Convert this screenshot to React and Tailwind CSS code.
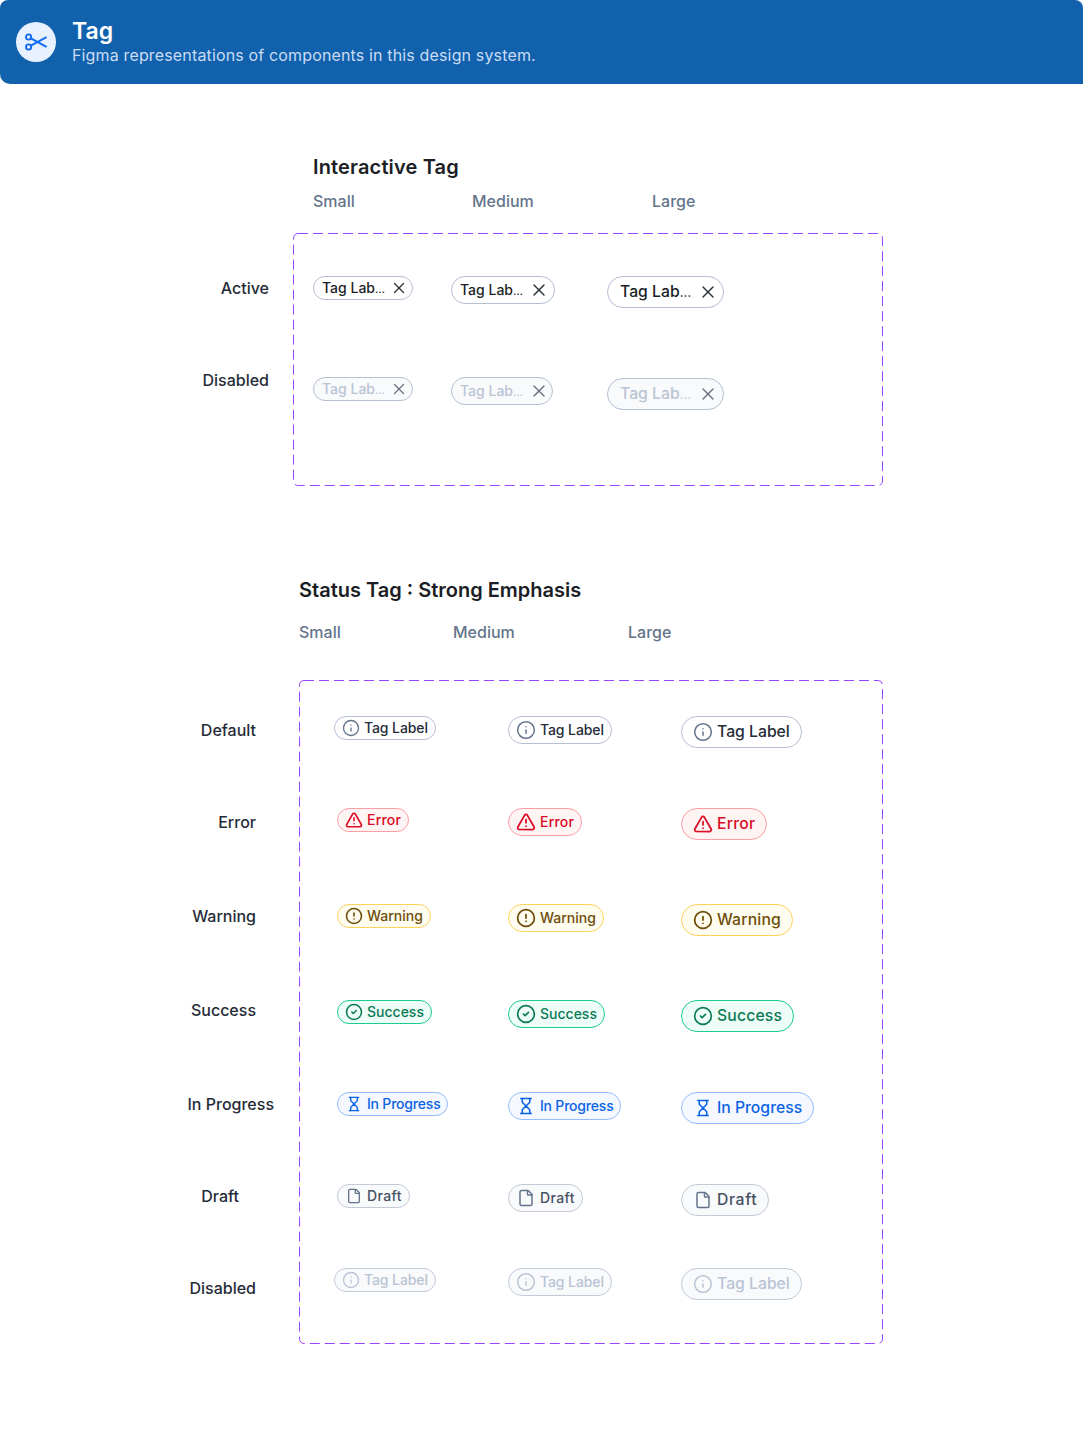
import React from "react";
import { X, Info, TriangleAlert, CircleAlert, CircleCheck, Hourglass, File } from "lucide-react";

const font = { fontFamily: '"Inter", "Open Sans", sans-serif' };

function DashedBox({ w, h, className, children }) {
  return (
    <div className={"relative " + className}>
      <svg className="absolute inset-0 pointer-events-none" width={w} height={h} fill="none">
        <rect x="0.5" y="0.5" width={w - 1} height={h - 1} rx="4.5" stroke="#9747FF" strokeDasharray="10 5" />
      </svg>
      {children}
    </div>
  );
}

function ScissorsIcon() {
  return (
    <svg width="24" height="18" viewBox="0 0 24 18" fill="none" stroke="#0f6cf0" strokeWidth="1.9" strokeLinecap="round">
      <circle cx="4.6" cy="4" r="2.6" />
      <circle cx="4.6" cy="14" r="2.6" />
      <path d="M6.9 5.4 22 13.6" />
      <path d="M6.9 12.6 22 4.4" />
    </svg>
  );
}

const SIZES = {
  s: { pill: "h-6 px-[7px] text-[14px]", icon: 18, text: "-translate-y-px" },
  m: { pill: "h-7 px-[7px] text-[14px]", icon: 20, text: "-translate-y-px" },
  l: { pill: "h-8 px-[11px] text-[15.75px]", icon: 20, text: "" },
};

const VARIANTS = {
  default: { pill: "border-[#b4bfd2] bg-white text-[#262c38]", icon: "text-[#64748b]", Icon: Info, label: "Tag Label", sw: 1.8, d: 0, tr: { s: "tracking-[-0.1px]", m: "tracking-[-0.1px]", l: "" } },
  error: { pill: "border-[#fb9fa6] bg-[#fff4f4] text-[#d90b25]", icon: "text-[#d90b25]", Icon: TriangleAlert, label: "Error", sw: 2.1, d: 0, tr: { s: "tracking-[0.2px]", m: "tracking-[0.2px]", l: "tracking-[0.2px]" } },
  warning: { pill: "border-[#fdd35c] bg-[#fffcf0] text-[#6e4e0b]", icon: "text-[#6e4e0b]", Icon: CircleAlert, label: "Warning", sw: 2.1, d: 0, tr: { s: "", m: "", l: "tracking-[0.15px]" } },
  success: { pill: "border-[#1ccb92] bg-[#eefdf8] text-[#0a7a55]", icon: "text-[#0a7a55]", Icon: CircleCheck, label: "Success", sw: 2, d: 0, tr: { s: "", m: "", l: "tracking-[0.15px]" } },
  progress: { pill: "border-[#94bcfc] bg-[#f5f9ff] text-[#0c63e4]", icon: "text-[#0c63e4]", Icon: Hourglass, label: "In Progress", sw: 2.1, d: 2, tr: { s: "tracking-[-0.2px]", m: "tracking-[-0.2px]", l: "" } },
  draft: { pill: "border-[#c3cad6] bg-[#f8fafc] text-[#465162]", icon: "text-[#64748b]", Icon: File, label: "Draft", sw: 2, d: 2, tr: { s: "tracking-[0.4px]", m: "tracking-[0.4px]", l: "tracking-[0.6px]" } },
  disabled: { pill: "border-[#c3cbd9] bg-[#f8fafc] text-[#bac4d4]", icon: "text-[#bac4d4]", Icon: Info, label: "Tag Label", sw: 1.8, d: 0, tr: { s: "tracking-[-0.1px]", m: "tracking-[-0.1px]", l: "" } },
};

function StatusTag({ variant, size, className = "" }) {
  const v = VARIANTS[variant];
  const s = SIZES[size];
  const I = v.Icon;
  return (
    <div className={`inline-flex items-center gap-1 rounded-full border font-medium whitespace-nowrap ${v.pill} ${s.pill} ${className}`}>
      <span className="shrink-0 flex items-center justify-center" style={{ width: s.icon, height: s.icon }}>
        <I size={s.icon - v.d} strokeWidth={v.sw} className={v.icon} />
      </span>
      <span className={`${s.text} ${v.tr[size]}`}>{v.label}</span>
    </div>
  );
}

function InteractiveTag({ size, disabled, className = "" }) {
  const cfg = {
    s: { pill: "h-6 w-[100px] pl-2 text-[14px]", x: 18, ml: "ml-[7px]", w: "w-[61px] -translate-y-px", dots: "text-[11px]" },
    m: { pill: disabled ? "h-7 w-[102px] pl-2 text-[14px]" : "h-7 w-[104px] pl-2 text-[14px]", x: 20, ml: "ml-[8px]", w: "w-[61px] -translate-y-px", dots: "text-[11px]" },
    l: { pill: "h-8 w-[117px] pl-3 text-[15.75px]", x: 20, ml: "ml-[8px]", w: "w-[70px]", dots: "text-[12.5px]" },
  }[size];
  return (
    <div className={`inline-flex items-center rounded-full border border-[#b4bfd2] font-medium whitespace-nowrap ${disabled ? "bg-[#f8fafc] text-[#bac4d4]" : "bg-white text-[#1b1e25]"} ${cfg.pill} ${className}`}>
      <span className={`${cfg.w} shrink-0`}>Tag Lab<span className={cfg.dots}>…</span></span>
      <X size={cfg.x} strokeWidth={1.7} className={`shrink-0 ${cfg.ml} ${disabled ? "text-[#6b7280]" : "text-[#2b303a]"}`} />
    </div>
  );
}

const STATUS_ROWS = [
  { label: "Default", variant: "default", top: "h-[92px]", pr: "pr-[18px]", lh: "h-[92px]", small: "" },
  { label: "Error", variant: "error", top: "h-[96px]", pr: "pr-[18px]", lh: "h-[94px]", small: "ml-[3px]" },
  { label: "Warning", variant: "warning", top: "h-[96px]", pr: "pr-[18px]", lh: "h-[94px]", small: "ml-[3px]" },
  { label: "Success", variant: "success", top: "h-[92px]", pr: "pr-[18px]", lh: "h-[94px]", small: "ml-[3px]" },
  { label: "In Progress", variant: "progress", top: "h-[92px]", pr: "pr-0", lh: "h-[92px]", small: "ml-[3px]" },
  { label: "Draft", variant: "draft", top: "h-[84px]", pr: "pr-[35px]", lh: "h-[92px]", small: "ml-[3px]" },
  { label: "Disabled", variant: "disabled", top: "h-8", pr: "pr-[18px]", lh: "h-6", small: "" },
];

export default function App() {
  return (
    <div className="w-[1083px] h-[1449px] bg-white overflow-hidden" style={font}>
      <header className="h-[84px] bg-[#1161ad] rounded-t-[8px] rounded-bl-[10px] flex items-center pl-4 gap-4">
        <div className="w-10 h-10 rounded-full bg-[#e8f1ff] flex items-center justify-center">
          <ScissorsIcon />
        </div>
        <div className="flex flex-col">
          <div className="text-[23px] leading-[26px] font-semibold text-white">Tag</div>
          <div className="text-[16px] tracking-[0.15px] leading-[22px] text-[#c9dcf3]">Figma representations of components in this design system.</div>
        </div>
      </header>

      <section className="pt-[68px]">
        <h2 className="ml-[313px] text-[20px] tracking-[0.15px] leading-[30px] font-semibold text-[#1b1e25]">Interactive Tag</h2>
        <div className="ml-[313px] mt-[7px] flex text-[16px] leading-6 font-medium text-[#64748b]">
          <span className="w-[159px]">Small</span>
          <span className="w-[180px]">Medium</span>
          <span>Large</span>
        </div>
        <div className="flex mt-[20px]">
          <div className="w-[269px] mr-6 pt-[43px] text-right text-[16px] leading-6 font-medium text-[#262c38]">
            <div className="h-[92px]">Active</div>
            <div>Disabled</div>
          </div>
          <DashedBox w={590} h={253} className="w-[590px] h-[253px] pl-5 pt-[43px]">
            <div className="grid grid-cols-[138px_156px_auto] justify-start items-start">
              <InteractiveTag size="s" />
              <InteractiveTag size="m" />
              <InteractiveTag size="l" />
            </div>
            <div className="grid grid-cols-[138px_156px_auto] justify-start items-start mt-[69px]">
              <InteractiveTag size="s" disabled />
              <InteractiveTag size="m" disabled />
              <InteractiveTag size="l" disabled className="mt-px" />
            </div>
          </DashedBox>
        </div>
      </section>

      <section className="pt-[89px]">
        <h2 className="ml-[299px] text-[20px] leading-[30px] font-semibold text-[#1b1e25]">Status Tag : Strong Emphasis</h2>
        <div className="ml-[299px] mt-[15px] flex text-[16px] leading-6 font-medium text-[#64748b]">
          <span className="w-[154px]">Small</span>
          <span className="w-[175px]">Medium</span>
          <span>Large</span>
        </div>
        <div className="flex mt-[36px]">
          <div className="w-[274px] mr-[25px] pt-[38px] text-right text-[16px] leading-6 font-medium text-[#262c38]">
            {STATUS_ROWS.map((r) => (
              <div key={r.label} className={`${r.lh} ${r.pr}`}>{r.label}</div>
            ))}
          </div>
          <DashedBox w={584} h={664} className="w-[584px] h-[664px] pl-[35px] pt-[36px]">
            {STATUS_ROWS.map((r) => (
              <div key={r.label} className={`grid grid-cols-[174px_173px_auto] justify-start items-start ${r.top}`}>
                <div><StatusTag variant={r.variant} size="s" className={r.small} /></div>
                <div><StatusTag variant={r.variant} size="m" /></div>
                <div><StatusTag variant={r.variant} size="l" /></div>
              </div>
            ))}
          </DashedBox>
        </div>
      </section>
    </div>
  );
}
